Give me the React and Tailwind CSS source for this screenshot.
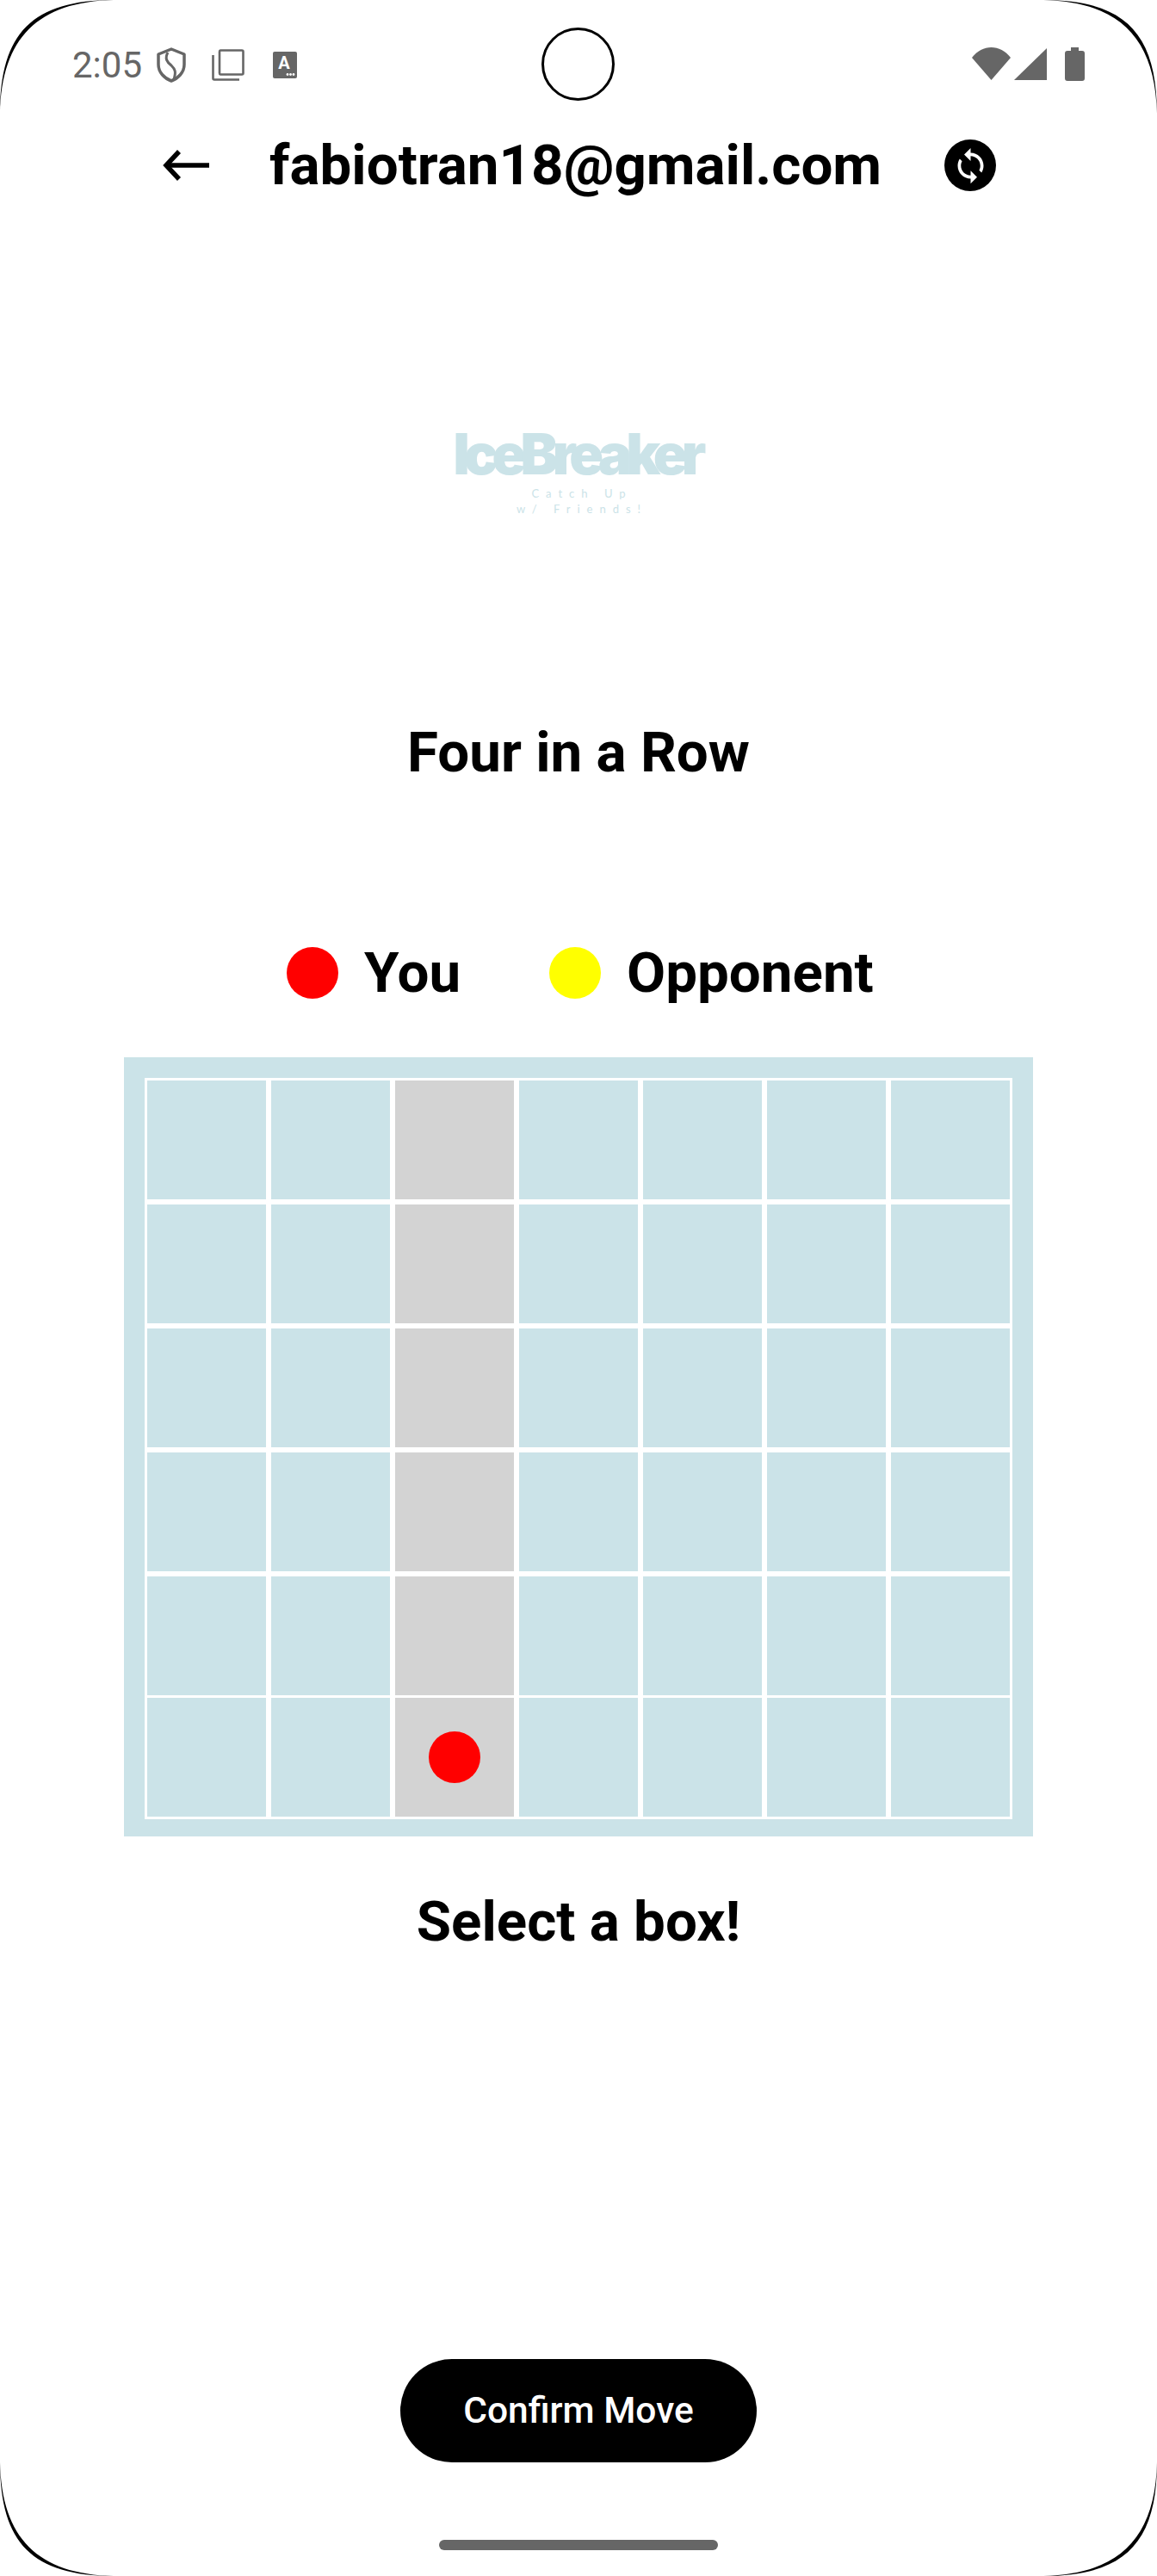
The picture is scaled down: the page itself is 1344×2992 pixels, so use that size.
const ROWS = 6;
const COLS = 7;
const roboto = "font-['Roboto',sans-serif]";

function ShieldIcon() {
  return (
    <svg width="34" height="41" viewBox="0 0 34 41" fill="none" stroke="#666666" strokeWidth="3.5">
      <path d="M17 2 L32 8 V20 C32 29 25 36 17 39 C9 36 2 29 2 20 V8 Z" strokeLinejoin="round" />
      <path d="M13 6 C9 13 12 17 17 21 C21 25 23 28 20 37" strokeWidth="3" />
    </svg>
  );
}

function CopyIcon() {
  return (
    <svg width="38" height="37" viewBox="0 0 38 37" fill="none" stroke="#666666" strokeWidth="2.6">
      <rect x="9" y="1.5" width="27.5" height="28" rx="1.5" />
      <path d="M1.5 7 V34 Q1.5 35.5 3 35.5 H32" />
    </svg>
  );
}

function KeyboardIcon() {
  return (
    <svg width="28" height="31" viewBox="0 0 28 31">
      <rect width="28" height="31" rx="2" fill="#666666" />
      <text x="13" y="20" textAnchor="middle" fontFamily="Roboto, sans-serif" fontWeight="700" fontSize="20" fill="#ffffff">A</text>
      <circle cx="17" cy="26.5" r="1.4" fill="#ffffff" />
      <circle cx="20.5" cy="26.5" r="1.4" fill="#ffffff" />
      <circle cx="24" cy="26.5" r="1.4" fill="#ffffff" />
    </svg>
  );
}

function StatusRight() {
  return (
    <div className="flex items-start">
      <svg width="45" height="38" viewBox="0 0 45 38" fill="#666666">
        <path d="M0 12 C12 -4 33 -4 45 12 L22.5 38 Z" />
      </svg>
      <svg className="ml-[4px] mt-[1px]" width="38" height="37" viewBox="0 0 38 37" fill="#666666">
        <path d="M38 0 V37 H0 Z" />
      </svg>
      <svg className="ml-[21px]" width="23" height="39" viewBox="0 0 23 39" fill="#666666">
        <path d="M7 0 H16 V4 H20 Q23 4 23 7 V36 Q23 39 20 39 H3 Q0 39 0 36 V7 Q0 4 3 4 H7 Z" />
      </svg>
    </div>
  );
}

// screen corner: hairline that tapers off at both ends
function Corner({ className }) {
  return (
    <svg className={`absolute pointer-events-none ${className}`} width="132" height="132" viewBox="0 0 132 132" fill="#000000">
      <path d="M0 132 C0 38 38 0 132 0 C44 2 2 44 0 132 Z" />
    </svg>
  );
}

function Board() {
  return (
    <div className="mx-[144px] w-[1056px] bg-[#cbe3e8] pt-[24px] pb-[20px] px-[24px]">
      <div className="bg-white p-[3px] flex flex-col">
        {Array.from({ length: ROWS }).map((_, r) => (
          <div key={r} className={`grid grid-cols-7 gap-x-[6px] ${r === 0 ? '' : r === ROWS - 1 ? 'mt-[3px]' : 'mt-[6px]'}`}>
            {Array.from({ length: COLS }).map((_, c) => (
              <div key={c} className={`h-[138px] flex items-center justify-center ${c === 2 ? 'bg-[#d3d3d3]' : 'bg-[#cbe3e8]'}`}>
                {c === 2 && r === ROWS - 1 && <div className="w-[60px] h-[60px] rounded-full bg-[#ff0000]" />}
              </div>
            ))}
          </div>
        ))}
      </div>
    </div>
  );
}

export default function App() {
  return (
    <div className={`relative w-[1344px] h-[2992px] overflow-hidden bg-white ${roboto}`}>
      <Corner className="top-0 left-0" />
      <Corner className="top-0 right-0 -scale-x-100" />
      <Corner className="bottom-0 left-0 -scale-y-100" />
      <Corner className="bottom-0 right-0 -scale-100" />
      <div className="absolute top-[32px] left-[629px] w-[85px] h-[85px] rounded-full border-[3px] border-black" />

      {/* status bar */}
      <div className="h-[162px] pt-[55px] pl-[84px] pr-[84px] flex justify-between items-start">
        <div className="flex items-start text-[#666666]">
          <span className="text-[42px] leading-[41px] w-[98px]">2:05</span>
          <ShieldIcon />
          <span className="ml-[30px] mt-[2px]"><CopyIcon /></span>
          <span className="ml-[33px] mt-[5px]"><KeyboardIcon /></span>
        </div>
        <StatusRight />
      </div>

      {/* header */}
      <div className="h-[60px] pl-[189px] flex items-center">
        <svg width="54" height="36" viewBox="0 0 54 36" fill="none" stroke="#000000" strokeWidth="5.5">
          <path d="M54 18 H4" />
          <path d="M19 2 L4 18 L19 34" />
        </svg>
        <h1 className="ml-[70px] w-[711px] text-[65.5px] leading-[60px] font-bold text-black whitespace-nowrap">fabiotran18@gmail.com</h1>
        <div className="ml-[73px] w-[60px] h-[60px] rounded-full bg-black flex items-center justify-center">
          <svg width="45" height="45" viewBox="0 0 24 24" fill="#ffffff">
            <path d="M12 4V1L8 5l4 4V6c3.31 0 6 2.69 6 6 0 1.01-.25 1.97-.7 2.8l1.46 1.46C19.54 15.03 20 13.57 20 12c0-4.42-3.58-8-8-8zm0 14c-3.31 0-6-2.69-6-6 0-1.01.25-1.97.7-2.8L5.24 7.74C4.46 8.97 4 10.43 4 12c0 4.42 3.58 8 8 8v3l4-4-4-4v3z" />
          </svg>
        </div>
      </div>

      {/* logo */}
      <div className="mt-[275px] ml-[8px] flex flex-col items-center text-[#cbe3e8]">
        <div className="mr-[12px] h-[60px] text-[66px] leading-[60px] font-['Inter',sans-serif] font-black tracking-[-7px]">IceBreaker</div>
        <div className="mt-[7px] h-[18px] text-[13px] leading-[18px] font-['Lato',sans-serif] tracking-[8px]">Catch Up</div>
        <div className="h-[18px] text-[13px] leading-[18px] font-['Lato',sans-serif] tracking-[8px]">w/ Friends!</div>
      </div>

      <h2 className="mt-[234px] h-[80px] text-center text-[65.5px] leading-[80px] font-bold text-black">Four in a Row</h2>

      {/* legend */}
      <div className="mt-[186px] h-[60px] pl-[333px] flex items-center text-black">
        <div className="w-[60px] h-[60px] rounded-full bg-[#ff0000]" />
        <span className="ml-[30px] w-[215px] text-[65.5px] leading-[60px] font-bold">You</span>
        <div className="w-[60px] h-[60px] rounded-full bg-[#ffff00]" />
        <span className="ml-[30px] text-[65.5px] leading-[60px] font-bold">Opponent</span>
      </div>

      <div className="mt-[68px]">
        <Board />
      </div>

      <h2 className="mt-[59px] h-[80px] text-center text-[65.5px] leading-[80px] font-bold text-black">Select a box!</h2>

      <div className="mt-[468px] flex justify-center">
        <button className="w-[414px] h-[120px] rounded-full bg-black text-white text-[42.5px] font-medium">Confirm Move</button>
      </div>

      <div className="mt-[90px] mx-auto w-[324px] h-[12px] rounded-full bg-[#666666]" />
    </div>
  );
}
